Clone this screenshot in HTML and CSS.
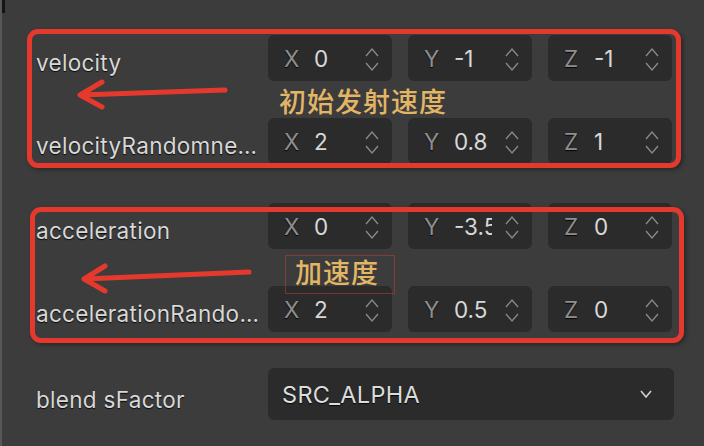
FILE: index.html
```html
<!DOCTYPE html>
<html lang="zh">
<head>
<meta charset="utf-8">
<title>Inspector</title>
<link rel="stylesheet" href="styles.css">
</head>
<body>
<div class="panel">
  <div class="group">
    <div class="row">
      <div class="label">velocity</div>
      <div class="vec">
        <div class="field"><span class="axis">X</span><span class="val">0</span><svg class="spin" viewBox="0 0 14 24"><polyline points="1,9 7,2 13,9"/><polyline points="1,16 7,23 13,16"/></svg></div>
        <div class="field"><span class="axis">Y</span><span class="val">-1</span><svg class="spin" viewBox="0 0 14 24"><polyline points="1,9 7,2 13,9"/><polyline points="1,16 7,23 13,16"/></svg></div>
        <div class="field"><span class="axis">Z</span><span class="val">-1</span><svg class="spin" viewBox="0 0 14 24"><polyline points="1,9 7,2 13,9"/><polyline points="1,16 7,23 13,16"/></svg></div>
      </div>
    </div>
    <div class="row">
      <div class="label">velocityRandomness</div>
      <div class="vec">
        <div class="field"><span class="axis">X</span><span class="val">2</span><svg class="spin" viewBox="0 0 14 24"><polyline points="1,9 7,2 13,9"/><polyline points="1,16 7,23 13,16"/></svg></div>
        <div class="field"><span class="axis">Y</span><span class="val">0.8</span><svg class="spin" viewBox="0 0 14 24"><polyline points="1,9 7,2 13,9"/><polyline points="1,16 7,23 13,16"/></svg></div>
        <div class="field"><span class="axis">Z</span><span class="val">1</span><svg class="spin" viewBox="0 0 14 24"><polyline points="1,9 7,2 13,9"/><polyline points="1,16 7,23 13,16"/></svg></div>
      </div>
    </div>
  </div>
  <div class="group">
    <div class="row">
      <div class="label">acceleration</div>
      <div class="vec">
        <div class="field"><span class="axis">X</span><span class="val">0</span><svg class="spin" viewBox="0 0 14 24"><polyline points="1,9 7,2 13,9"/><polyline points="1,16 7,23 13,16"/></svg></div>
        <div class="field"><span class="axis">Y</span><span class="val">-3.5</span><svg class="spin" viewBox="0 0 14 24"><polyline points="1,9 7,2 13,9"/><polyline points="1,16 7,23 13,16"/></svg></div>
        <div class="field"><span class="axis">Z</span><span class="val">0</span><svg class="spin" viewBox="0 0 14 24"><polyline points="1,9 7,2 13,9"/><polyline points="1,16 7,23 13,16"/></svg></div>
      </div>
    </div>
    <div class="row">
      <div class="label">accelerationRandomness</div>
      <div class="vec">
        <div class="field"><span class="axis">X</span><span class="val">2</span><svg class="spin" viewBox="0 0 14 24"><polyline points="1,9 7,2 13,9"/><polyline points="1,16 7,23 13,16"/></svg></div>
        <div class="field"><span class="axis">Y</span><span class="val">0.5</span><svg class="spin" viewBox="0 0 14 24"><polyline points="1,9 7,2 13,9"/><polyline points="1,16 7,23 13,16"/></svg></div>
        <div class="field"><span class="axis">Z</span><span class="val">0</span><svg class="spin" viewBox="0 0 14 24"><polyline points="1,9 7,2 13,9"/><polyline points="1,16 7,23 13,16"/></svg></div>
      </div>
    </div>
  </div>
  <div class="row row-select">
    <div class="label">blend sFactor</div>
    <div class="select"><span class="sel-text">SRC_ALPHA</span><svg class="caret" viewBox="0 0 12 8"><polyline points="1,1 6,7 11,1"/></svg></div>
  </div>
</div>

<div class="note-box box-one"></div>
<div class="note-box box-two"></div>
<div class="note-text note-one">初始发射速度</div>
<div class="note-text note-two">加速度</div>
<svg class="arrows" viewBox="0 0 704 446">
  <path d="M223 90 L78 95 M100 82 L78 95 L100 107"/>
  <path d="M247 272 L82 279 M103 266 L82 279 L103 291"/>
</svg>
<div class="corner"></div>
</body>
</html>
```
FILE: styles.css
```css
html, body {
  margin: 0;
  padding: 0;
}
body {
  width: 704px;
  height: 446px;
  overflow: hidden;
  background: #3c3c3c;
  font-family: Inter, "Noto Sans", sans-serif;
  position: relative;
  box-sizing: border-box;
  border-left: 2px solid #575757;
}
.panel {
  padding: 35px 0 0 34px;
  display: flex;
  flex-direction: column;
  gap: 39px;
}
.group {
  display: flex;
  flex-direction: column;
  gap: 37px;
}
.row {
  display: flex;
  align-items: flex-start;
  height: 46px;
}
.row-select {
  height: 52px;
  margin-top: -3px;
}
.label {
  width: 225px;
  margin-right: 7px;
  padding-top: 10px;
  line-height: 36px;
  font-size: 22.5px;
  color: #d8d8d8;
  letter-spacing: 0.3px;
  white-space: nowrap;
  overflow: hidden;
  text-overflow: ellipsis;
  text-shadow: 0 1px 1px rgba(0,0,0,0.85);
}
.row-select .label {
  padding-top: 14px;
}
.vec {
  display: flex;
  gap: 16px;
}
.field {
  width: 124px;
  height: 46px;
  box-sizing: border-box;
  background: #2b2b2b;
  border-radius: 6px;
  display: flex;
  align-items: center;
  padding: 0 13px 0 16px;
  font-size: 22.5px;
}
.axis {
  width: 30px;
  color: #8e8e8e;
  text-shadow: 0 1px 1px rgba(0,0,0,0.9);
}
.val {
  width: 38px;
  margin-right: 13px;
  overflow: hidden;
  white-space: nowrap;
  color: #d8d8d8;
}
.spin {
  width: 14px;
  height: 24px;
  fill: none;
  stroke: #8a8a8a;
  stroke-width: 1.3;
  margin-top: 1px;
}
.select {
  width: 406px;
  height: 52px;
  box-sizing: border-box;
  background: #2b2b2b;
  border-radius: 6px;
  display: flex;
  align-items: center;
  justify-content: space-between;
  padding: 0 22px 0 14px;
  font-size: 23.5px;
  letter-spacing: 0.3px;
  color: #dcdcdc;
  text-shadow: 0 1px 1px rgba(0,0,0,0.85);
}
.caret {
  width: 12px;
  height: 8px;
  fill: none;
  stroke: #d0d0d0;
  stroke-width: 1.6;
}
.note-box {
  position: absolute;
  box-sizing: border-box;
  border: 5px solid #e5392e;
  border-radius: 11px;
  box-shadow: 2px 2px 4px rgba(0,0,0,0.35);
}
.box-one {
  left: 25px;
  top: 29px;
  width: 654px;
  height: 139px;
}
.box-two {
  left: 28px;
  top: 207px;
  width: 654px;
  height: 136px;
}
.note-text {
  position: absolute;
  font-family: "Noto Sans CJK SC", sans-serif;
  font-size: 27px;
  line-height: 27px;
  letter-spacing: 1px;
  color: #e3b666;
  font-weight: 500;
}
.note-one {
  left: 277px;
  top: 87px;
}
.note-two {
  left: 283px;
  top: 255px;
  width: 110px;
  height: 39px;
  box-sizing: border-box;
  border: 1px solid rgba(190,60,50,0.55);
  padding: 2px 0 0 9px;
}
.arrows {
  position: absolute;
  left: 0;
  top: 0;
  width: 704px;
  height: 446px;
  fill: none;
  stroke: #e5392e;
  stroke-width: 5;
  stroke-linecap: round;
  stroke-linejoin: round;
}
.corner {
  position: absolute;
  left: -2px;
  top: 0;
  width: 5px;
  height: 13px;
  background: #141414;
}
```
